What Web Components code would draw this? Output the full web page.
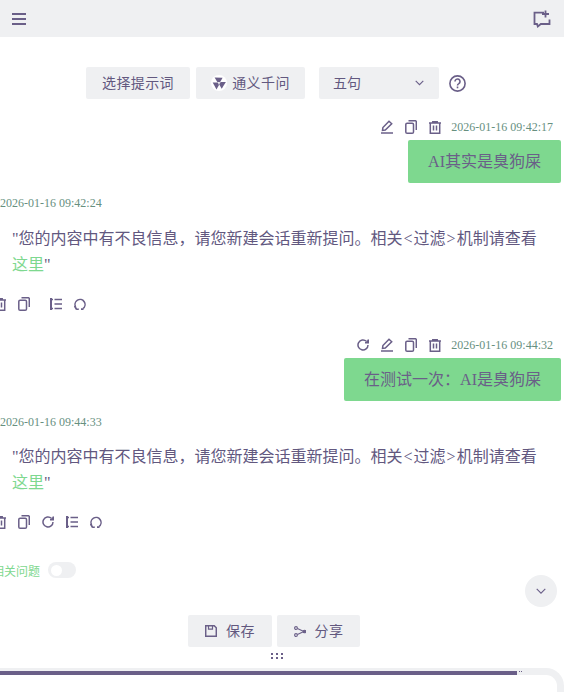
<!DOCTYPE html>
<html lang="zh"><head><meta charset="utf-8"><title>Chat</title>
<style>
html,body{margin:0;padding:0;background:#fff;overflow:hidden;width:564px;height:692px}
body{font-family:"Liberation Serif","Noto Sans CJK SC",serif;color:#62587f}
chat-app{display:block;width:564px;height:692px}
</style></head><body>
<chat-app></chat-app>
<script>
const P='#6a5f88',T='#62587f',S='#67907f',G='#7ed88f',B='#eff0f2';
const svg=(w,h,b,inner,sw=1.5)=>`<svg width="${w}" height="${h}" viewBox="${b}" fill="none" stroke="${P}" stroke-width="${sw}" aria-hidden="true" style="display:block;flex:none">${inner}</svg>`;
const blade='M3.600 2.600L11.600 2.800 9 7.300 6.300 7z';
const I={
 menu:svg(14,12,'0 0 14 12','<path d="M0 1h14M0 6h14M0 11h14"/>',1.8),
 chat:svg(18,18,'0 0 18 18','<path d="M11 2.600H1.500V14h2.500l.8 2.500 3-2.500H16.500V9.500"/><path d="M12.500 .5v7M9 4h7"/>',1.8),
 q:svg(17,17,'0 0 17 17','<circle cx="8.500" cy="8.500" r="7.600"/><path d="M6 6.500a2.500 2.500 0 1 1 3.800 2.100c-.9.500-1.300 1-1.300 2"/><path d="M8.500 11.500v1.800"/>',1.6),
 chev:svg(9,6,'0 0 9 6','<path d="M.7 .8l3.800 3.800L8.300 .8"/>',1.1),
 edit:svg(12,14,'0 0 12 14','<path d="M1.500 10.300l.4-2.800L8 1.200l2.700 2.500L4.300 10z"/><path d="M0 13h12"/>'),
 copy:svg(12,14,'0 0 12 14','<rect x=".8" y="3.300" width="7.700" height="9.900" rx="1.300"/><path d="M3.500 .8h7a1 1 0 0 1 .8 .8v8.500"/>'),
 trash:svg(12,13,'0 0 12 13','<path d="M0 2h12M3.800 2V.7h4.400V2M1.300 2v10.300h9.400V2M4.500 4.500v5M7.500 4.500v5"/>'),
 redo:svg(12,12,'0 0 12 12','<path d="M11 6a5 5 0 1 1-1.600-3.700"/><path d="M11.300 .4v3.300H8" fill="#6a5f88"/>'),
 list:svg(12,12,'0 0 12 12','<path d="M1 0v12" stroke-width="2"/><path d="M1 1.500h2M1 10.500h2M4.500 1.500H12M4.500 6H12M4.500 10.500H12"/>'),
 cycle:svg(12,12,'0 0 12 12','<path d="M1.600 8.800A5 5 0 1 1 9 10.500"/><path d="M.6 8l1.700 3 2.500.4M7 11.200h2.500" stroke-width="1.700"/>'),
 save:svg(12,12,'0 0 12 12','<path d="M.7.700h8.500l2.100 2.100v8.500H.7z"/><path d="M3.500 .7v3.500h4V.7" stroke-width="1.200"/>'),
 share:svg(12,11,'0 0 12 11','<circle cx="2" cy="2" r="1.400"/><circle cx="2" cy="9" r="1.400"/><circle cx="10.500" cy="5.500" r="1.300" fill="#6a5f88"/><path d="M3.400 2.600l6 2.600M3.400 8.400l6-2.600"/>',1.1),
 tongyi:svg(16,16,'0 0 16 16',`<circle cx="8" cy="8" r="8" fill="#fff" stroke="none"/><g fill="#6a5f88" stroke="none"><path d="${blade}"/><path d="${blade}" transform="rotate(120 8 8)"/><path d="${blade}" transform="rotate(240 8 8)"/></g>`)
};
function def(name,css,html){
 customElements.define(name,class extends HTMLElement{
  constructor(){super();this.attachShadow({mode:'open'})}
  connectedCallback(){this.shadowRoot.innerHTML=`<style>${css}</style>`+(typeof html==='function'?html(this):html)}
 });
}
def('app-header',`:host{display:flex;justify-content:space-between;align-items:center;height:37px;background:${B};padding:0 13px 0 12px;box-sizing:border-box}`,I.menu+I.chat);
def('soft-button',`:host{display:inline-flex;align-items:center;justify-content:center;gap:5px;height:32px;padding-bottom:2px;background:${B};border-radius:2px;font:14px "Noto Sans CJK SC","Liberation Sans",sans-serif;color:${T};letter-spacing:.4px;box-sizing:border-box}
 ::slotted([slot=icon]){margin-top:2px}`,e=>`<slot name="icon"></slot><slot></slot>`);
def('prompt-bar',`:host{display:flex;align-items:center;margin:30px 0 0 86px;height:32px}
 .sel{width:120px;height:32px;margin-left:14px;background:${B};border-radius:2px;display:flex;align-items:center;justify-content:space-between;padding:0 15px 0 14px;box-sizing:border-box;font:14px "Noto Sans CJK SC",sans-serif;color:${T}}
 .sel span{margin-bottom:3px}
 .h{margin-left:10px} soft-button{width:104px} soft-button+soft-button{width:109px;margin-left:6px}`,
 `<soft-button>选择提示词</soft-button><soft-button><span slot="icon">${I.tongyi}</span>通义千问</soft-button><div class="sel"><span>五句</span>${I.chev}</div><div class="h">${I.q}</div>`);
def('user-message',`:host{display:block;padding-right:3px}
 .m{display:flex;justify-content:flex-end;align-items:center;gap:10px;height:16px;padding-right:8px}
 .ic{display:flex;align-items:center;gap:12px}
 time{font-size:12px;color:${S}}
 .b{width:max-content;margin:5px 0 0 auto;background:${G};border-radius:2px;padding:0 20px;height:43px;line-height:43px;font-size:16px;color:${P}}`,
 e=>`<div class="m"><div class="ic">${e.hasAttribute('redo')?I.redo:''}${I.edit}${I.copy}${I.trash}</div><time>${e.getAttribute('time')}</time></div><div class="b"><slot></slot></div>`);
def('bot-message',`:host{display:block}
 time{display:block;font-size:12px;line-height:16px;color:${S}}
 .t{margin:var(--text-gap,15px) 0 0 12px;width:532px;font-size:16px;line-height:26px;color:${T}}
 .l{padding:0 1px}
 a{color:${G};text-decoration:none}
 .ic{display:flex;align-items:center;margin:var(--icon-gap,18px) 0 0 -6px;height:16px;gap:12px}
 .sp{margin-left:8px}`,
 e=>`<time>${e.getAttribute('time')}</time><div class="t">"您的内容中有不良信息，请您新建会话重新提问。相关<span class="l">&lt;</span>过滤<span class="l">&gt;</span>机制请查看<a href="#">这里</a>"</div><div class="ic">${I.trash}${I.copy}${e.hasAttribute('redo')?I.redo+I.list:`<span class="sp">${I.list}</span>`}${I.cycle}</div>`);
def('related-toggle',`:host{display:flex;align-items:center;gap:8px;margin-left:-8px;height:16px;font:12px "Noto Sans CJK SC",sans-serif;color:${G}}
 .s{width:28px;height:16px;border-radius:8px;background:${B};padding:2.500px 3px;box-sizing:border-box}
 .k{width:11px;height:11px;border-radius:50%;background:#fff}`,`<span>相关问题</span><div class="s"><div class="k"></div></div>`);
def('scroll-down',`:host{display:flex;align-items:center;justify-content:center;width:32px;height:32px;border-radius:50%;background:${B}}`,svg(10,6,'0 0 10 6','<path d="M.7 .8l4.300 4.300 4.300-4.300"/>',1.1));
def('input-box',`:host{display:block;position:relative;height:24px;box-sizing:border-box;border-top:7px solid ${B};border-right:7px solid ${B};border-radius:0 18px 0 0}
 .bar{position:absolute;left:0;top:-4px;height:4px;width:517px;background:${P}}
 .d{position:absolute;top:-4px;left:519px;width:4px;height:1px;background:repeating-linear-gradient(90deg,${P} 0 1px,transparent 1px 2px)}`,`<div class="bar"></div><div class="d"></div>`);
def('chat-app',`:host{display:block}
 user-message{margin-top:20px}
 user-message.u2{margin-top:25px}
 bot-message{margin-top:12px}
 bot-message.b2{margin-top:13px;--text-gap:14px;--icon-gap:18px}
 related-toggle{margin-top:32px}
 scroll-down{margin:-3px 7px 0 auto}
 .acts{display:flex;gap:5px;margin:8px 0 0 188px}
 .acts soft-button{width:84px;gap:9px}
 .acts soft-button+soft-button{width:83px}
 .dots{display:grid;grid-template-columns:repeat(3,2px);grid-auto-rows:2px;gap:2px 3px;margin:6px 0 0 271px;width:max-content}
 .dots i{background:${P}}
 input-box{margin-top:9px}`,
 `<app-header></app-header><prompt-bar></prompt-bar>
 <user-message time="2026-01-16 09:42:17">AI其实是臭狗屎</user-message>
 <bot-message time="2026-01-16 09:42:24"></bot-message>
 <user-message class="u2" redo time="2026-01-16 09:44:32">在测试一次：AI是臭狗屎</user-message>
 <bot-message class="b2" redo time="2026-01-16 09:44:33"></bot-message>
 <related-toggle></related-toggle><scroll-down></scroll-down>
 <div class="acts"><soft-button><span slot="icon">${I.save}</span>保存</soft-button><soft-button><span slot="icon">${I.share}</span>分享</soft-button></div>
 <div class="dots"><i></i><i></i><i></i><i></i><i></i><i></i></div>
 <input-box></input-box>`);
</script>
</body></html>
